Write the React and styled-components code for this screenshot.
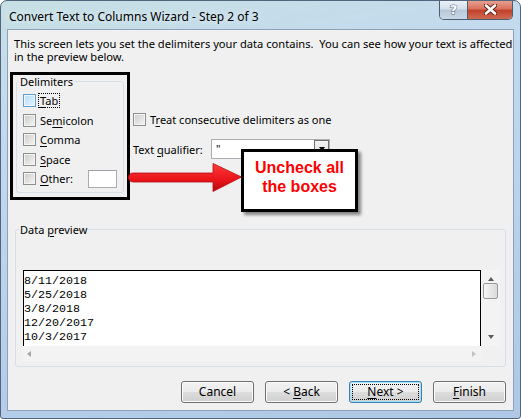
import React from "react";
import styled, { createGlobalStyle, css } from "styled-components";

const GlobalStyle = createGlobalStyle`
  html, body {
    margin: 0;
    padding: 0;
    background: #ffffff;
  }
  body {
    font-family: "Noto Sans", "Open Sans", sans-serif;
    font-size: 11px;
    color: #000;
  }
`;

const Window = styled.div`
  width: 521px;
  height: 419px;
  box-sizing: border-box;
  display: flex;
  flex-direction: column;
  padding: 0 6px 7px 6px;
  border: 1px solid #52657c;
  border-radius: 7px 7px 3px 3px;
  background: linear-gradient(
    170deg,
    #c6e0e4 0%,
    #c3d9ef 25%,
    #b9d1ea 60%,
    #aec8e5 100%
  );
  overflow: hidden;
`;

const TitleBar = styled.div`
  height: 28px;
  display: flex;
  justify-content: space-between;
  align-items: flex-start;
`;

const Title = styled.div`
  padding: 8px 0 0 2px;
  font-size: 12px;
  line-height: 15px;
  color: #000;
  text-shadow: 0 0 6px rgba(255, 255, 255, 0.9);
`;

const CaptionButtons = styled.div`
  display: flex;
  margin-right: 1px;
  margin-top: -1px;
  border: 1px solid #4d5d70;
  border-top: none;
  border-radius: 0 0 5px 5px;
  overflow: hidden;
`;

const CaptionButton = styled.div`
  height: 19px;
  display: flex;
  align-items: center;
  justify-content: center;
  ${(p) =>
    p.$close
      ? css`
          width: 44px;
          background: linear-gradient(
            to bottom,
            #e8a595 0%,
            #d9735f 45%,
            #c2422c 55%,
            #cf6a52 100%
          );
        `
      : css`
          width: 27px;
          border-right: 1px solid #4d5d70;
          background: linear-gradient(
            to bottom,
            #eef3f8 0%,
            #d4dfea 45%,
            #b7c8da 55%,
            #c9d8e8 100%
          );
        `}
`;

const HelpGlyph = styled.span`
  font-family: "DejaVu Sans", sans-serif;
  font-weight: bold;
  font-size: 13px;
  line-height: 13px;
  color: #ffffff;
  -webkit-text-stroke: 1px #50647d;
  paint-order: stroke fill;
`;

const Client = styled.div`
  height: 382px;
  box-sizing: border-box;
  border: 1px solid #8da1b8;
  background: #f0f0f0;
  display: flex;
  flex-direction: column;
`;

const Intro = styled.div`
  margin-top: 7px;
  padding: 0 6px;
  font-size: 11.15px;
`;

const IntroLine = styled.div`
  height: 13px;
  line-height: 13px;
  white-space: nowrap;
`;

const U = styled.span`
  text-decoration: underline;
  text-underline-offset: 2px;
`;

const MiddleRow = styled.div`
  position: relative;
  display: flex;
  margin-top: 9px;
  height: 128px;
`;

const BlackBox = styled.div`
  margin-left: 2px;
  width: 120px;
  height: 128px;
  box-sizing: border-box;
  border: 3px solid #000;
`;

const GroupBox = styled.fieldset`
  box-sizing: border-box;
  min-width: 0;
  margin: 0 3px;
  border: 1px solid #d5dfe5;
  border-radius: 3px;
  ${(p) =>
    p.$compact
      ? css`
          height: 118px;
          padding: 3px 6px 0 6px;
        `
      : css`
          margin: 23px 7px 0 7px;
          padding: 34px 7px 4px 7px;
        `}
`;

const Legend = styled.legend`
  padding: 0 1px;
  margin-left: -4px;
  line-height: 13px;
  font-size: 11px;
`;

const CheckList = styled.div`
  display: flex;
  flex-direction: column;
`;

const CheckRow = styled.div`
  height: 19.5px;
  display: flex;
  align-items: center;
  gap: 4px;
  ${(p) =>
    p.$spaced &&
    css`
      margin-bottom: 12px;
      height: 16px;
    `}
`;

const Box = styled.span`
  width: 13px;
  height: 13px;
  box-sizing: border-box;
  flex: none;
  border: 1px solid #8e8f8f;
  box-shadow: inset 0 0 0 1px #f4f4f4;
  background: ${(p) =>
    p.$hover
      ? "linear-gradient(135deg, #b8def9 0%, #e2f2fd 100%)"
      : "linear-gradient(135deg, #cbcbcb 0%, #f6f6f6 100%)"};
  ${(p) =>
    p.$hover &&
    css`
      border-color: #5aa0d9;
    `}
`;

const CheckLabel = styled.span`
  line-height: 13px;
  white-space: nowrap;
  ${(p) =>
    p.$focus &&
    css`
      outline: 1px dotted #000;
      outline-offset: 0px;
      padding: 0 1px;
      margin-left: -1px;
    `}
`;

const OtherInput = styled.span`
  margin-left: 11px;
  width: 29px;
  height: 18px;
  box-sizing: border-box;
  background: #fff;
  border: 1px solid #abadb3;
  border-top-color: #9da0aa;
`;

const RightColumn = styled.div`
  margin-left: 3px;
  padding-top: 39px;
  display: flex;
  flex-direction: column;
`;

const QualifierRow = styled.div`
  display: flex;
  align-items: center;
  height: 20px;
`;

const QualifierLabel = styled.span`
  width: 78px;
  line-height: 13px;
`;

const Combo = styled.div`
  width: 119px;
  height: 20px;
  box-sizing: border-box;
  border: 1px solid #abadb3;
  background: #fff;
  display: flex;
  justify-content: space-between;
`;

const ComboText = styled.span`
  padding: 2px 0 0 4px;
  line-height: 13px;
`;

const ComboButton = styled.span`
  width: 15px;
  box-sizing: border-box;
  border: 1px solid #707070;
  background: linear-gradient(to bottom, #f2f2f2, #dcdcdc);
  display: flex;
  justify-content: center;
  padding-top: 6px;
`;

const Arrow = styled.svg`
  position: absolute;
  left: 120px;
  top: 91px;
  overflow: visible;
`;

const Callout = styled.div`
  position: absolute;
  left: 233px;
  top: 77px;
  width: 117px;
  height: 63px;
  box-sizing: border-box;
  border: 3px solid #000;
  background: #fff;
  box-shadow: 3px 3px 3px rgba(0, 0, 0, 0.45);
  padding-top: 6px;
  text-align: center;
  font-family: "Liberation Sans", Arial, sans-serif;
  font-weight: bold;
  font-size: 16px;
  line-height: 19px;
  color: #ff0000;
`;

const PreviewGrid = styled.div`
  display: grid;
  grid-template-columns: 458px 19px;
  grid-template-rows: 76px 16px;
`;

const ListBox = styled.div`
  border: 1px solid #000;
  border-bottom: none;
  background: #fff;
  padding-top: 3px;
  overflow: hidden;
  font-family: "Liberation Mono", "Courier New", monospace;
  font-size: 11.7px;
  line-height: 14px;
  white-space: pre;
`;

const ScrollBar = styled.div`
  background: #f3f3f3;
  display: flex;
  align-items: center;
  justify-content: space-between;
  flex-direction: ${(p) => (p.$vertical ? "column" : "row")};
  padding: ${(p) => (p.$vertical ? "0 2px" : "0 5px 0 4px")};
`;

const ScrollArrow = styled.span`
  width: 0;
  height: 0;
  flex: none;
  ${(p) =>
    p.$dir === "up" &&
    css`
      margin-top: 7px;
      border-left: 3.5px solid transparent;
      border-right: 3.5px solid transparent;
      border-bottom: 4px solid #5a5a5a;
    `}
  ${(p) =>
    p.$dir === "down" &&
    css`
      margin-bottom: 7px;
      border-left: 3.5px solid transparent;
      border-right: 3.5px solid transparent;
      border-top: 4px solid ${p.$dark ? "#000" : "#5a5a5a"};
    `}
  ${(p) =>
    p.$dir === "left" &&
    css`
      border-top: 3.5px solid transparent;
      border-bottom: 3.5px solid transparent;
      border-right: 4px solid #a6a6a6;
    `}
  ${(p) =>
    p.$dir === "right" &&
    css`
      border-top: 3.5px solid transparent;
      border-bottom: 3.5px solid transparent;
      border-left: 4px solid #c2c2c2;
    `}
`;

const Thumb = styled.span`
  width: 15px;
  height: 16px;
  margin-top: 2px;
  box-sizing: border-box;
  border: 1px solid #9a9a9a;
  border-radius: 2px;
  background: linear-gradient(to right, #f6f6f6, #dadada);
  margin-bottom: auto;
`;

const Corner = styled.div`
  background: #f0f0f0;
`;

const ButtonRow = styled.div`
  display: flex;
  justify-content: flex-end;
  gap: 11px;
  margin-top: 14px;
  padding-right: 7px;
`;

const Button = styled.div`
  width: 73px;
  height: 22px;
  box-sizing: border-box;
  border: 1px solid ${(p) => (p.$default ? "#3c7fb1" : "#707070")};
  border-radius: 3px;
  background: linear-gradient(
    to bottom,
    #f2f2f2 0%,
    #ebebeb 49%,
    #dddddd 51%,
    #cfcfcf 100%
  );
  box-shadow: inset 0 0 0 1px
    ${(p) => (p.$default ? "#9fe3fb" : "#fbfbfb")};
  display: flex;
  padding: 2px;
  font-size: 12px;
`;

const ButtonText = styled.span`
  flex: 1;
  display: block;
  text-align: center;
  line-height: 14px;
  white-space: pre;
  border: 1px dotted ${(p) => (p.$focus ? "#000" : "transparent")};
`;

const Checkbox = ({ hover, focus, children, spaced }) => (
  <CheckRow $spaced={spaced}>
    <Box $hover={hover} />
    <CheckLabel $focus={focus}>{children}</CheckLabel>
  </CheckRow>
);

const previewLines = ["8/11/2018", "5/25/2018", "3/8/2018", "12/20/2017", "10/3/2017"];

export default function App() {
  return (
    <>
      <GlobalStyle />
      <Window>
        <TitleBar>
          <Title>Convert Text to Columns Wizard - Step 2 of 3</Title>
          <CaptionButtons>
            <CaptionButton>
              <HelpGlyph>?</HelpGlyph>
            </CaptionButton>
            <CaptionButton $close>
              <svg width="13" height="11" viewBox="0 0 13 11">
                <path
                  d="M2 1.5 L11 9.5 M11 1.5 L2 9.5"
                  stroke="#5a2218"
                  strokeWidth="4.4"
                  strokeLinecap="round"
                />
                <path
                  d="M2 1.5 L11 9.5 M11 1.5 L2 9.5"
                  stroke="#ffffff"
                  strokeWidth="2.6"
                  strokeLinecap="round"
                />
              </svg>
            </CaptionButton>
          </CaptionButtons>
        </TitleBar>

        <Client>
          <Intro>
            <IntroLine>
              This screen lets you set the delimiters your data contains.&nbsp; You can see how your text is affected
            </IntroLine>
            <IntroLine>in the preview below.</IntroLine>
          </Intro>

          <MiddleRow>
            <BlackBox>
              <GroupBox $compact>
                <Legend>Delimiters</Legend>
                <CheckList>
                  <Checkbox hover focus>
                    <U>T</U>ab
                  </Checkbox>
                  <Checkbox>
                    Se<U>m</U>icolon
                  </Checkbox>
                  <Checkbox>
                    <U>C</U>omma
                  </Checkbox>
                  <Checkbox>
                    <U>S</U>pace
                  </Checkbox>
                  <CheckRow>
                    <Box />
                    <CheckLabel>
                      <U>O</U>ther:
                    </CheckLabel>
                    <OtherInput />
                  </CheckRow>
                </CheckList>
              </GroupBox>
            </BlackBox>

            <RightColumn>
              <Checkbox spaced>
                T<U>r</U>eat consecutive delimiters as one
              </Checkbox>
              <QualifierRow>
                <QualifierLabel>
                  Text <U>q</U>ualifier:
                </QualifierLabel>
                <Combo>
                  <ComboText>"</ComboText>
                  <ComboButton>
                    <ScrollArrow $dir="down" $dark />
                  </ComboButton>
                </Combo>
              </QualifierRow>
            </RightColumn>

            <Arrow width="114" height="29" viewBox="0 0 114 29">
              <defs>
                <linearGradient id="arrowFill" x1="0" y1="0" x2="0" y2="1">
                  <stop offset="0" stopColor="#ff3a3a" />
                  <stop offset="0.6" stopColor="#e8141a" />
                  <stop offset="1" stopColor="#b80a0f" />
                </linearGradient>
              </defs>
              <path
                d="M5 10 L85 10 L85 0.5 L113.5 14 L85 28.5 L85 19 L5 19 A4.5 4.5 0 0 1 5 10 Z"
                fill="url(#arrowFill)"
                stroke="#b50e12"
                strokeWidth="0.8"
              />
            </Arrow>

            <Callout>
              Uncheck all
              <br />
              the boxes
            </Callout>
          </MiddleRow>

          <GroupBox>
            <Legend>
              Data <U>p</U>review
            </Legend>
            <PreviewGrid>
              <ListBox>{previewLines.join("\n")}</ListBox>
              <ScrollBar $vertical>
                <ScrollArrow $dir="up" />
                <Thumb />
                <ScrollArrow $dir="down" />
              </ScrollBar>
              <ScrollBar>
                <ScrollArrow $dir="left" />
                <ScrollArrow $dir="right" />
              </ScrollBar>
              <Corner />
            </PreviewGrid>
          </GroupBox>

          <ButtonRow>
            <Button>
              <ButtonText>Cancel</ButtonText>
            </Button>
            <Button>
              <ButtonText>
                <span>&lt; </span>
                <U>B</U>ack
              </ButtonText>
            </Button>
            <Button $default>
              <ButtonText $focus>
                <U>N</U>ext &gt;
              </ButtonText>
            </Button>
            <Button>
              <ButtonText>
                <U>F</U>inish
              </ButtonText>
            </Button>
          </ButtonRow>
        </Client>
      </Window>
    </>
  );
}
